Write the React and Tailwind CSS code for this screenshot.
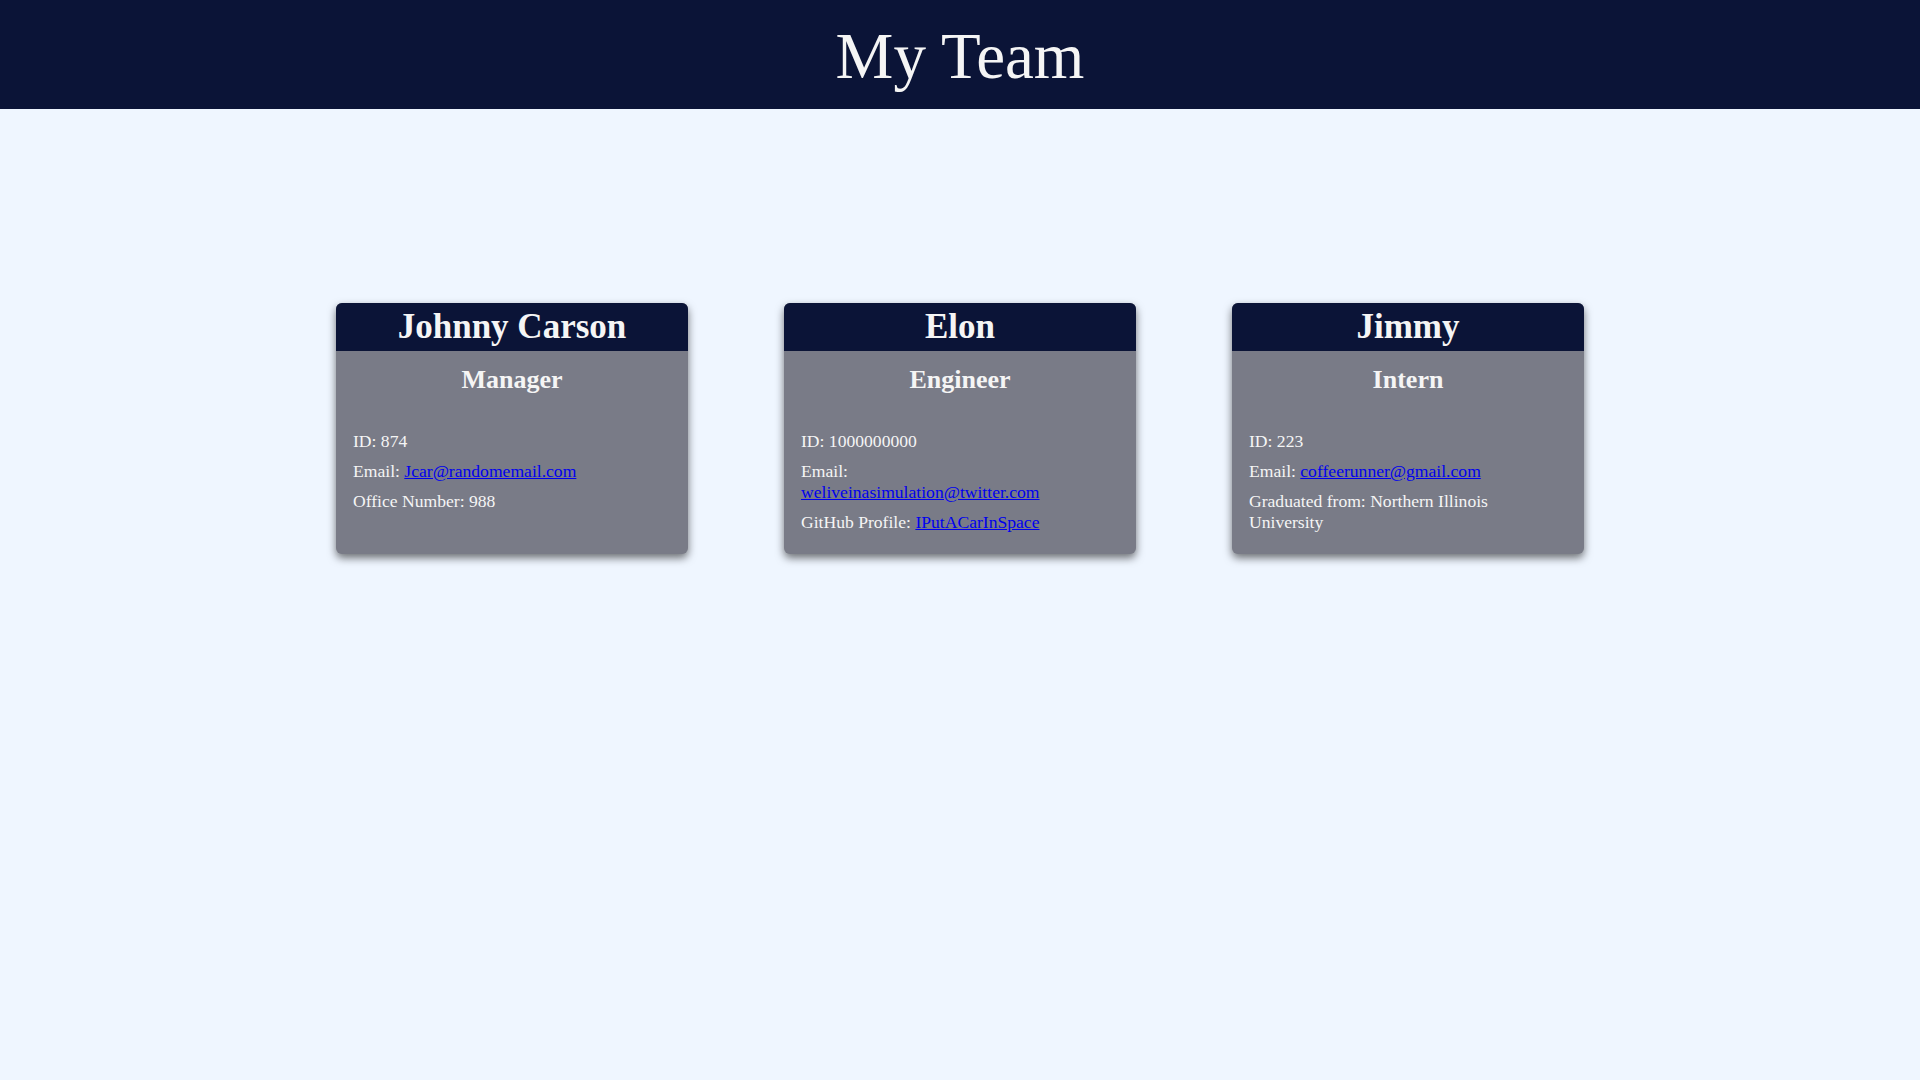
import React from 'react';

const team = [
  {
    name: 'Johnny Carson',
    role: 'Manager',
    id: '874',
    email: 'Jcar@randomemail.com',
    extra: { label: 'Office Number', value: '988' },
  },
  {
    name: 'Elon',
    role: 'Engineer',
    id: '1000000000',
    email: 'weliveinasimulation@twitter.com',
    extra: { label: 'GitHub Profile', value: 'IPutACarInSpace', link: true },
  },
  {
    name: 'Jimmy',
    role: 'Intern',
    id: '223',
    email: 'coffeerunner@gmail.com',
    extra: { label: 'Graduated from', value: 'Northern Illinois University' },
  },
];

function Card({ member }) {
  const { extra } = member;
  return (
    <div className="w-[352px] rounded-[6px] overflow-hidden bg-[#797b87] shadow-[0_4px_8px_rgba(0,0,0,0.55)] pb-[21px]">
      <div className="bg-[#0b1437] h-[48px] flex items-center justify-center">
        <h2 className="text-[35px] font-bold leading-[40px] text-[#f5f5f5]">{member.name}</h2>
      </div>
      <h3 className="mt-[14px] text-center text-[26px] font-bold leading-[30px] text-[#f5f5f5]">{member.role}</h3>
      <ul className="mt-[36px] pl-[17px] w-[300px] flex flex-col gap-[9px] text-[17.6px] leading-[21px] text-[#f5f5f5]">
        <li>{`ID: ${member.id}`}</li>
        <li>
          Email: <a href="#" className="text-[#0000ee] underline">{member.email}</a>
        </li>
        {extra.link ? (
          <li>
            {extra.label}: <a href="#" className="text-[#0000ee] underline">{extra.value}</a>
          </li>
        ) : (
          <li>{`${extra.label}: ${extra.value}`}</li>
        )}
      </ul>
    </div>
  );
}

export default function App() {
  return (
    <div className="min-h-screen bg-[#eff6ff] font-['Liberation_Serif','Times_New_Roman',serif]">
      <header className="bg-[#0b1437] h-[109px] flex items-center justify-center pt-[3px]">
        <h1 className="text-[65px] leading-[74px] text-[#f5f5f5]">My Team</h1>
      </header>
      <main className="flex justify-center items-stretch gap-[96px] mt-[194px]">
        {team.map((m) => (
          <Card key={m.name} member={m} />
        ))}
      </main>
    </div>
  );
}
